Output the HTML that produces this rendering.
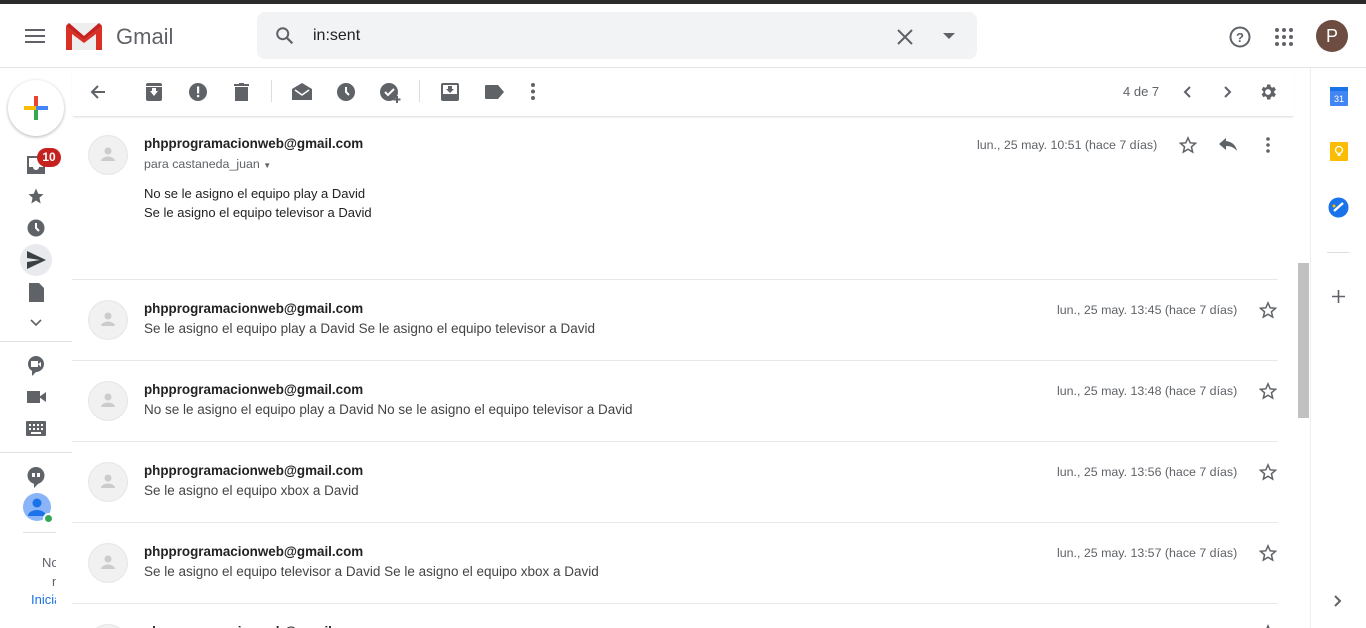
<!DOCTYPE html>
<html><head><meta charset="utf-8"><style>
*{margin:0;padding:0;box-sizing:border-box}
html,body{width:1366px;height:628px;overflow:hidden}
body{background:#fff;font-family:"Liberation Sans",Arial,sans-serif;position:relative;color:#222}
.abs{position:absolute}
.topbar{left:0;top:0;width:1366px;height:4px;background:#2b2b2b}
.hdr{left:0;top:4px;width:1366px;height:64px;border-bottom:1px solid #e5e5e5}
.search{left:257px;top:12px;width:720px;height:47px;background:#f1f3f4;border-radius:8px}
.tb{left:72px;top:68px;width:1222px;height:48px;box-shadow:0 2px 2px -1px rgba(0,0,0,.15)}
.row{left:72px;width:1206px;border-bottom:1px solid #e8e8e8}
.av{width:40px;height:40px;border-radius:50%;background:#f1f1f1;border:1px solid #e6e6e6}
.from{font-weight:bold;font-size:13.4px;color:#222}
.snip{font-size:13.5px;color:#444}
.date{font-size:12.4px;color:#5f6368}
svg{position:absolute}
</style></head><body>
<div class="abs topbar"></div>
<div class="abs hdr"></div>
<svg style="left:25px;top:28px" width="20" height="16"><rect y="1" width="20" height="2" fill="#5f6368"/><rect y="7" width="20" height="2" fill="#5f6368"/><rect y="13" width="20" height="2" fill="#5f6368"/></svg>
<svg style="left:66px;top:23px" width="36" height="27" viewBox="0 0 36 27"><path d="M2 0h32a2 2 0 0 1 2 2v25H0V2a2 2 0 0 1 2-2z" fill="#eee"/><path d="M0 27V3l18 14L36 3v24h-6V11L18 20 6 11v16z" fill="#d93025"/><path d="M0 3l3-3 15 13L33 0l3 3-18 14z" fill="#c5221f"/></svg>
<div class="abs" style="left:116px;top:24px;font-size:22px;color:#5f6368">Gmail</div>
<div class="abs search"></div>
<svg style="left:274px;top:25px" width="22" height="22" viewBox="0 0 24 24"><circle cx="9.5" cy="9.5" r="6" stroke="#5f6368" stroke-width="2.2" fill="none"/><path d="M14 14l6 6" stroke="#5f6368" stroke-width="2.4"/></svg>
<div class="abs" style="left:313px;top:27px;font-size:16px;color:#222">in:sent</div>
<svg style="left:896px;top:28px" width="18" height="18"><path d="M2 2l14 14M16 2L2 16" stroke="#5f6368" stroke-width="2"/></svg>
<svg style="left:943px;top:33px" width="12" height="6"><path d="M0 0h12L6 6z" fill="#5f6368"/></svg>
<svg style="left:1228px;top:25px" width="24" height="24" viewBox="0 0 24 24"><circle cx="12" cy="12" r="9.5" stroke="#5f6368" stroke-width="2" fill="none"/><text x="12" y="17" font-size="13" font-weight="bold" text-anchor="middle" fill="#5f6368" font-family="Liberation Sans">?</text></svg>
<svg style="left:1275px;top:28px" width="18" height="18"><g fill="#5f6368"><circle cx="2" cy="2" r="2"/><circle cx="9" cy="2" r="2"/><circle cx="16" cy="2" r="2"/><circle cx="2" cy="9" r="2"/><circle cx="9" cy="9" r="2"/><circle cx="16" cy="9" r="2"/><circle cx="2" cy="16" r="2"/><circle cx="9" cy="16" r="2"/><circle cx="16" cy="16" r="2"/></g></svg>
<div class="abs" style="left:1316px;top:20px;width:32px;height:32px;border-radius:50%;background:#6d4c41;color:#fff;font-size:18px;text-align:center;line-height:32px">P</div>

<div class="abs" style="left:8px;top:80px;width:56px;height:56px;border-radius:50%;background:#fff;box-shadow:0 1px 3px rgba(0,0,0,.3)"></div>
<svg style="left:24px;top:96px" width="24" height="24"><rect x="10" y="0" width="4" height="12" fill="#ea4335"/><rect x="10" y="12" width="4" height="12" fill="#34a853"/><rect x="0" y="10" width="12" height="4" fill="#fbbc04"/><rect x="12" y="10" width="12" height="4" fill="#4285f4"/></svg>
<svg style="left:27px;top:156px" width="18" height="18"><path d="M0 0h18v18H0z" fill="#5f6368"/><path d="M2 2h14v9h-4a3 3 0 0 1-6 0H2z" fill="#fff"/></svg>
<div class="abs" style="left:37px;top:148px;width:24px;height:19px;border-radius:10px;background:#c5221f;color:#fff;font-size:12px;font-weight:bold;text-align:center;line-height:19px">10</div>
<svg style="left:27px;top:187px" width="18" height="18" viewBox="0 0 24 24"><path d="M12 2l3 7 7 .6-5.4 4.7L18.2 22 12 18l-6.2 4 1.6-7.7L2 9.6 9 9z" fill="#5f6368"/></svg>
<svg style="left:27px;top:219px" width="18" height="18"><circle cx="9" cy="9" r="8.5" fill="#5f6368"/><path d="M9 4v5l3 3" stroke="#fff" stroke-width="2" fill="none"/></svg>
<div class="abs" style="left:20px;top:244px;width:32px;height:32px;border-radius:50%;background:#e8eaed"></div>
<svg style="left:27px;top:251px" width="19" height="18"><path d="M0 0l19 9L0 18v-7l13-2L0 7z" fill="#3c4043"/></svg>
<svg style="left:29px;top:283px" width="15" height="19"><path d="M0 0h10l5 5v14H0z" fill="#5f6368"/></svg>
<svg style="left:30px;top:319px" width="12" height="8"><path d="M1 1l5 5 5-5" stroke="#5f6368" stroke-width="1.6" fill="none"/></svg>
<div class="abs" style="left:0;top:341px;width:72px;border-top:1px solid #e0e0e0"></div>
<svg style="left:27px;top:356px" width="18" height="20"><circle cx="9" cy="8" r="8" fill="#5f6368"/><path d="M5 14l0 6 5-5z" fill="#5f6368"/><rect x="4" y="5" width="7" height="6" fill="#fff"/><path d="M11 8l3-2v5z" fill="#fff"/></svg>
<svg style="left:27px;top:391px" width="19" height="12"><rect width="13" height="12" fill="#5f6368"/><path d="M12 6l7-5v10z" fill="#5f6368"/></svg>
<svg style="left:26px;top:421px" width="20" height="15"><rect width="20" height="15" rx="1" fill="#5f6368"/><g fill="#fff"><rect x="3" y="3" width="2" height="2"/><rect x="7" y="3" width="2" height="2"/><rect x="11" y="3" width="2" height="2"/><rect x="15" y="3" width="2" height="2"/><rect x="3" y="7" width="2" height="2"/><rect x="7" y="7" width="2" height="2"/><rect x="11" y="7" width="2" height="2"/><rect x="15" y="7" width="2" height="2"/><rect x="5" y="11" width="10" height="2"/></g></svg>
<div class="abs" style="left:0;top:452px;width:72px;border-top:1px solid #e0e0e0"></div>
<svg style="left:27px;top:467px" width="18" height="21"><circle cx="9" cy="8.5" r="8.5" fill="#5f6368"/><path d="M7 14v7l6-6z" fill="#5f6368"/><rect x="5" y="6" width="3" height="4" fill="#fff"/><rect x="10" y="6" width="3" height="4" fill="#fff"/></svg>
<div class="abs" style="left:23px;top:493px;width:28px;height:28px;border-radius:50%;background:#8ab4f8"></div>
<svg style="left:26px;top:496px" width="22" height="22"><circle cx="11" cy="7" r="4.5" fill="#1a73e8"/><path d="M2 20a9 6 0 0 1 18 0z" fill="#1a73e8"/></svg>
<div class="abs" style="left:43px;top:513px;width:11px;height:11px;border-radius:50%;background:#34a853;border:2px solid #fff"></div>
<div class="abs" style="left:23px;top:532px;width:33px;border-top:1px solid #e0e0e0"></div>
<div class="abs" style="left:42px;top:555px;font-size:13px;color:#5f6368;width:14px;overflow:hidden">No</div>
<div class="abs" style="left:52px;top:574px;font-size:13px;color:#5f6368;width:4px;overflow:hidden">n</div>
<div class="abs" style="left:31px;top:592px;font-size:13px;color:#1a73e8;width:25px;overflow:hidden;white-space:nowrap">Inicia</div>

<div class="abs tb"></div>
<svg style="left:90px;top:84px" width="16" height="16"><path d="M15 8H2M8 2L2 8l6 6" stroke="#5f6368" stroke-width="2" fill="none"/></svg>
<svg style="left:146px;top:83px" width="16" height="18"><rect y="0" width="16" height="18" rx="2" fill="#5f6368"/><path d="M4 8h8l-4 5z" fill="#fff"/><rect x="6" y="5" width="4" height="4" fill="#fff"/><rect x="0" y="3" width="16" height="1" fill="#fff"/></svg>
<svg style="left:189px;top:83px" width="18" height="18"><circle cx="9" cy="9" r="9" fill="#5f6368"/><rect x="8" y="3.5" width="2.2" height="7" fill="#fff"/><rect x="8" y="12" width="2.2" height="2.2" fill="#fff"/></svg>
<svg style="left:234px;top:83px" width="15" height="18"><rect x="0" y="1" width="15" height="2" fill="#5f6368"/><rect x="5" y="0" width="5" height="2" fill="#5f6368"/><path d="M1 4h13v14H1z" fill="#5f6368"/></svg>
<div class="abs" style="left:271px;top:80px;height:22px;border-left:1px solid #ddd"></div>
<svg style="left:292px;top:83px" width="20" height="17"><path d="M10 0l10 6v11H0V6z" fill="#5f6368"/><path d="M3 7l7 5 7-5" stroke="#fff" stroke-width="1.5" fill="none"/></svg>
<svg style="left:337px;top:83px" width="18" height="18"><circle cx="9" cy="9" r="9" fill="#5f6368"/><path d="M9 4v5l3 3" stroke="#fff" stroke-width="2" fill="none"/></svg>
<svg style="left:380px;top:82px" width="22" height="22"><circle cx="9" cy="10" r="9" fill="#5f6368"/><path d="M5 10l3 3 6-6" stroke="#fff" stroke-width="2" fill="none"/><path d="M17 14v7M13.5 17.5h7" stroke="#5f6368" stroke-width="2"/></svg>
<div class="abs" style="left:419px;top:80px;height:22px;border-left:1px solid #ddd"></div>
<svg style="left:441px;top:83px" width="18" height="18"><rect width="18" height="18" rx="2" fill="#5f6368"/><rect x="2" y="2" width="14" height="9" fill="#fff"/><path d="M5 6h8l-4 4z" fill="#5f6368"/><rect x="7" y="3" width="4" height="4" fill="#5f6368"/></svg>
<svg style="left:485px;top:85px" width="19" height="14"><path d="M0 1a1 1 0 0 1 1-1h12l6 7-6 7H1a1 1 0 0 1-1-1z" fill="#5f6368"/></svg>
<svg style="left:531px;top:83px" width="4" height="17"><circle cx="2" cy="2" r="2" fill="#5f6368"/><circle cx="2" cy="8.5" r="2" fill="#5f6368"/><circle cx="2" cy="15" r="2" fill="#5f6368"/></svg>
<div class="abs" style="left:1123px;top:84px;font-size:13px;color:#5f6368">4 de 7</div>
<svg style="left:1183px;top:86px" width="8" height="12"><path d="M7 1L2 6l5 5" stroke="#5f6368" stroke-width="2" fill="none"/></svg>
<svg style="left:1224px;top:86px" width="8" height="12"><path d="M1 1l5 5-5 5" stroke="#5f6368" stroke-width="2" fill="none"/></svg>
<svg style="left:1258px;top:82px" width="20" height="20" viewBox="0 0 24 24"><path fill="#5f6368" d="M19.4 13a7.5 7.5 0 0 0 0-2l2.1-1.6-2-3.5-2.5 1a7 7 0 0 0-1.700-1L14.9 3h-4l-.4 2.9a7 7 0 0 0-1.7 1l-2.5-1-2 3.5L6.4 11a7.5 7.5 0 0 0 0 2l-2.1 1.6 2 3.5 2.5-1a7 7 0 0 0 1.7 1l.4 2.9h4l.4-2.9a7 7 0 0 0 1.7-1l2.5 1 2-3.5zM12 15.5A3.5 3.5 0 1 1 12 8.5a3.5 3.5 0 0 1 0 7z"/></svg>

<div class="abs" style="left:1310px;top:68px;height:560px;border-left:1px solid #eee"></div>
<svg style="left:1330px;top:87px" width="18" height="19"><rect y="1" width="18" height="18" rx="1" fill="#4285f4"/><rect y="0" width="18" height="4" fill="#1a73e8"/><text x="9" y="15" font-size="9" text-anchor="middle" fill="#fff" font-family="Liberation Sans">31</text></svg>
<svg style="left:1330px;top:142px" width="18" height="19"><rect width="18" height="19" rx="1" fill="#fbbc04"/><circle cx="9" cy="8" r="3.5" stroke="#fff" stroke-width="1.3" fill="none"/><rect x="7.5" y="12" width="3" height="2" fill="#fff"/></svg>
<svg style="left:1328px;top:197px" width="21" height="21"><circle cx="10.5" cy="10.5" r="10" fill="#1a73e8"/><path d="M6 14l9-8" stroke="#fff" stroke-width="2.4"/><circle cx="6" cy="9" r="1.5" fill="#fbbc04"/></svg>
<div class="abs" style="left:1327px;top:252px;width:22px;border-top:1px solid #ddd"></div>
<svg style="left:1332px;top:290px" width="13" height="13"><path d="M6.5 0v13M0 6.5h13" stroke="#5f6368" stroke-width="1.6"/></svg>
<svg style="left:1334px;top:595px" width="8" height="12"><path d="M1 1l5 5-5 5" stroke="#5f6368" stroke-width="2" fill="none"/></svg>
<div class="abs" style="left:1298px;top:263px;width:11px;height:155px;background:#c1c1c1"></div>

<div class="abs row" style="top:120px;height:160px"></div>
<div class="abs av" style="left:88px;top:135px"></div>
<svg style="left:99px;top:145px" width="18" height="18"><circle cx="9" cy="6" r="3.5" fill="#ccc"/><path d="M2 16a7 4.5 0 0 1 14 0z" fill="#ccc"/></svg>
<div class="abs from" style="left:144px;top:136px">phpprogramacionweb@gmail.com</div>
<div class="abs" style="left:144px;top:157px;font-size:12.4px;color:#5f6368">para castaneda_juan <span style="font-size:8px">▼</span></div>
<div class="abs" style="left:144px;top:184px;font-size:13px;color:#222;line-height:19px">No se le asigno el equipo play a David<br>Se le asigno el equipo televisor a David</div>
<div class="abs date" style="left:977px;top:138px">lun., 25 may. 10:51 (hace 7 días)</div>
<svg style="left:1179px;top:136px" width="18" height="18" viewBox="0 0 24 24"><path d="M12 2.5l2.9 6.6 7.1.6-5.4 4.7 1.6 7-6.2-3.7-6.2 3.7 1.6-7L2 9.7l7.1-.6z" stroke="#5f6368" stroke-width="2" fill="none"/></svg>
<svg style="left:1219px;top:138px" width="18" height="14"><path d="M7 0L0 6l7 6V8c5 0 8 1.5 11 5-1-5-4-9-11-10z" fill="#5f6368"/></svg>
<svg style="left:1266px;top:137px" width="4" height="16"><circle cx="2" cy="2" r="1.8" fill="#5f6368"/><circle cx="2" cy="8" r="1.8" fill="#5f6368"/><circle cx="2" cy="14" r="1.8" fill="#5f6368"/></svg>

<div class="abs row" style="top:280px;height:81px"></div>
<div class="abs av" style="left:88px;top:300px"></div>
<svg style="left:99px;top:310px" width="18" height="18"><circle cx="9" cy="6" r="3.5" fill="#ccc"/><path d="M2 16a7 4.5 0 0 1 14 0z" fill="#ccc"/></svg>
<div class="abs from" style="left:144px;top:301px">phpprogramacionweb@gmail.com</div>
<div class="abs snip" style="left:144px;top:321px">Se le asigno el equipo play a David Se le asigno el equipo televisor a David</div>
<div class="abs date" style="left:1057px;top:303px">lun., 25 may. 13:45 (hace 7 días)</div>
<svg style="left:1259px;top:301px" width="18" height="18" viewBox="0 0 24 24"><path d="M12 2.5l2.9 6.6 7.1.6-5.4 4.7 1.6 7-6.2-3.7-6.2 3.7 1.6-7L2 9.7l7.1-.6z" stroke="#5f6368" stroke-width="2" fill="none"/></svg>

<div class="abs row" style="top:361px;height:81px"></div>
<div class="abs av" style="left:88px;top:381px"></div>
<svg style="left:99px;top:391px" width="18" height="18"><circle cx="9" cy="6" r="3.5" fill="#ccc"/><path d="M2 16a7 4.5 0 0 1 14 0z" fill="#ccc"/></svg>
<div class="abs from" style="left:144px;top:382px">phpprogramacionweb@gmail.com</div>
<div class="abs snip" style="left:144px;top:402px">No se le asigno el equipo play a David No se le asigno el equipo televisor a David</div>
<div class="abs date" style="left:1057px;top:384px">lun., 25 may. 13:48 (hace 7 días)</div>
<svg style="left:1259px;top:382px" width="18" height="18" viewBox="0 0 24 24"><path d="M12 2.5l2.9 6.6 7.1.6-5.4 4.7 1.6 7-6.2-3.7-6.2 3.7 1.6-7L2 9.7l7.1-.6z" stroke="#5f6368" stroke-width="2" fill="none"/></svg>

<div class="abs row" style="top:442px;height:81px"></div>
<div class="abs av" style="left:88px;top:462px"></div>
<svg style="left:99px;top:472px" width="18" height="18"><circle cx="9" cy="6" r="3.5" fill="#ccc"/><path d="M2 16a7 4.5 0 0 1 14 0z" fill="#ccc"/></svg>
<div class="abs from" style="left:144px;top:463px">phpprogramacionweb@gmail.com</div>
<div class="abs snip" style="left:144px;top:483px">Se le asigno el equipo xbox a David</div>
<div class="abs date" style="left:1057px;top:465px">lun., 25 may. 13:56 (hace 7 días)</div>
<svg style="left:1259px;top:463px" width="18" height="18" viewBox="0 0 24 24"><path d="M12 2.5l2.9 6.6 7.1.6-5.4 4.7 1.6 7-6.2-3.7-6.2 3.7 1.6-7L2 9.7l7.1-.6z" stroke="#5f6368" stroke-width="2" fill="none"/></svg>

<div class="abs row" style="top:523px;height:81px"></div>
<div class="abs av" style="left:88px;top:543px"></div>
<svg style="left:99px;top:553px" width="18" height="18"><circle cx="9" cy="6" r="3.5" fill="#ccc"/><path d="M2 16a7 4.5 0 0 1 14 0z" fill="#ccc"/></svg>
<div class="abs from" style="left:144px;top:544px">phpprogramacionweb@gmail.com</div>
<div class="abs snip" style="left:144px;top:564px">Se le asigno el equipo televisor a David Se le asigno el equipo xbox a David</div>
<div class="abs date" style="left:1057px;top:546px">lun., 25 may. 13:57 (hace 7 días)</div>
<svg style="left:1259px;top:544px" width="18" height="18" viewBox="0 0 24 24"><path d="M12 2.5l2.9 6.6 7.1.6-5.4 4.7 1.6 7-6.2-3.7-6.2 3.7 1.6-7L2 9.7l7.1-.6z" stroke="#5f6368" stroke-width="2" fill="none"/></svg>

<div class="abs" style="left:72px;top:604px;width:1206px;height:24px;overflow:hidden">
<div class="abs av" style="left:16px;top:20px"></div>
<div class="abs from" style="left:72px;top:20px">phpprogramacionweb@gmail.com</div>
<svg style="left:1187px;top:20px" width="18" height="18" viewBox="0 0 24 24"><path d="M12 2.5l2.9 6.6 7.1.6-5.4 4.7 1.6 7-6.2-3.7-6.2 3.7 1.6-7L2 9.7l7.1-.6z" stroke="#5f6368" stroke-width="2" fill="none"/></svg>
</div>
</body></html>
